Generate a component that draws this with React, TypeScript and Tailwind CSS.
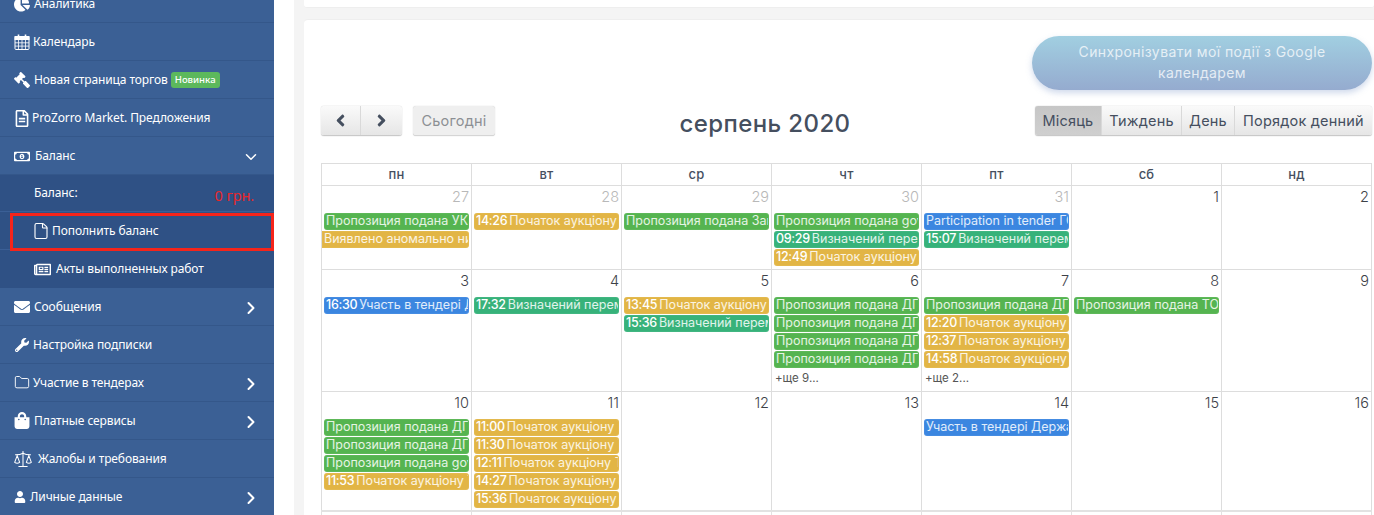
import React from "react";
import {
  FaChartPie, FaGavel, FaRegFileAlt, FaRegMoneyBillAlt, FaRegNewspaper,
  FaEnvelope, FaWrench, FaShoppingBag, FaUser, FaAngleRight, FaAngleLeft,
} from "react-icons/fa";
import { ChevronRight, ChevronDown, File, Folder, Scale } from "lucide-react";

type Ev = { t?: string; x: string; c: "g" | "y" | "b" | "t"; cont?: boolean };
type Day = { n: number; muted?: boolean; ev?: Ev[]; more?: string };

const colors: Record<Ev["c"], string> = {
  g: "bg-[#55b450]",
  y: "bg-[#e2b545]",
  b: "bg-[#3b86e0]",
  t: "bg-[#37b27a]",
};

const P = "Пропозиция подана ";
const A = "Початок аукціону ";
const V = "Визначений переможець";

const weeks: { h: string; days: Day[] }[] = [
  {
    h: "h-[84px]",
    days: [
      { n: 27, muted: true, ev: [{ x: P + "УКРАЇНА", c: "g" }, { x: "Виявлено аномально низьку ціну", c: "y", cont: true }] },
      { n: 28, muted: true, ev: [{ t: "14:26", x: A + "Т", c: "y" }] },
      { n: 29, muted: true, ev: [{ x: P + "Запоріжжя", c: "g" }] },
      { n: 30, muted: true, ev: [{ x: P + "gov.ua", c: "g" }, { t: "09:29", x: V, c: "t" }, { t: "12:49", x: A + "Т", c: "y" }] },
      { n: 31, muted: true, ev: [{ x: "Participation in tender ГО", c: "b" }, { t: "15:07", x: V, c: "t" }] },
      { n: 1 },
      { n: 2 },
    ],
  },
  {
    h: "h-[122px]",
    days: [
      { n: 3, ev: [{ t: "16:30", x: "Участь в тендері Державна", c: "b" }] },
      { n: 4, ev: [{ t: "17:32", x: V, c: "t" }] },
      { n: 5, ev: [{ t: "13:45", x: A + "Т", c: "y" }, { t: "15:36", x: V, c: "t" }] },
      { n: 6, ev: [{ x: P + "ДГ", c: "g" }, { x: P + "ДГ", c: "g" }, { x: P + "ДГ", c: "g" }, { x: P + "ДГ", c: "g" }], more: "+ще 9..." },
      { n: 7, ev: [{ x: P + "ДГ", c: "g" }, { t: "12:20", x: A + "Т", c: "y" }, { t: "12:37", x: A + "Т", c: "y" }, { t: "14:58", x: A + "Т", c: "y" }], more: "+ще 2..." },
      { n: 8, ev: [{ x: P + "ТОВ", c: "g" }] },
      { n: 9 },
    ],
  },
  {
    h: "h-[119px]",
    days: [
      { n: 10, ev: [{ x: P + "ДГ", c: "g" }, { x: P + "ДГ", c: "g" }, { x: P + "gov.ua", c: "g" }, { t: "11:53", x: A + "Т", c: "y" }] },
      { n: 11, ev: [{ t: "11:00", x: A + "Т", c: "y" }, { t: "11:30", x: A + "Т", c: "y" }, { t: "12:11", x: A + "Т", c: "y" }, { t: "14:27", x: A + "Т", c: "y" }, { t: "15:36", x: A + "Т", c: "y" }] },
      { n: 12 },
      { n: 13 },
      { n: 14, ev: [{ x: "Участь в тендері Державна", c: "b" }] },
      { n: 15 },
      { n: 16 },
    ],
  },
];

const headers = ["пн", "вт", "ср", "чт", "пт", "сб", "нд"];

function CalIcon() {
  return (
    <svg width="16" height="16" viewBox="0 0 16 16" fill="none" stroke="white" strokeWidth="1">
      <rect x="1" y="2.5" width="14" height="13" rx="1" />
      <rect x="1" y="2.5" width="14" height="3" fill="white" />
      <path d="M4.5 0.5v3M11.5 0.5v3" strokeWidth="1.6" />
      <path d="M4.5 5.5v10M8 5.5v10M11.5 5.5v10M1 8.8h14M1 12.1h14" strokeWidth="0.8" />
    </svg>
  );
}

function Item({ icon, label, gap, chevron, badge, top }: { icon: React.ReactNode; label: string; gap: string; chevron?: "r" | "d"; badge?: boolean; top?: boolean }) {
  return (
    <div className={`flex h-[38px] items-center border-b border-[#34578a] bg-[#3b6095] pl-[14px] pr-[13px] text-[12px] tracking-[-0.1px] text-white ${top ? "pt-[1px]" : ""}`}>
      <span className="flex w-[16px] shrink-0 justify-center text-[16px]">{icon}</span>
      <span className={gap}>{label}</span>
      {badge && <span className="ml-[3px] rounded-[3px] bg-[#5cb85c] px-[4px] text-[9.5px] font-medium leading-[16px] tracking-normal">Новинка</span>}
      {chevron === "r" && <ChevronRight size={20} strokeWidth={2.4} className="ml-auto mt-[3px]" />}
      {chevron === "d" && <ChevronDown size={18} strokeWidth={2} className="ml-auto mt-[2px] mr-[1px]" />}
    </div>
  );
}

function Sidebar() {
  return (
    <aside className="h-[515px] w-[274px] shrink-0 overflow-hidden bg-[#3b6095] font-['Noto_Sans',sans-serif]">
      <div className="-mt-[15px]">
        <Item top icon={<FaChartPie />} label="Аналитика" gap="ml-[4px]" />
        <Item top icon={<CalIcon />} label="Календарь" gap="ml-[3px]" />
        <Item top icon={<FaGavel className="-scale-x-100" />} label="Новая страница торгов" gap="ml-[4px]" badge />
        <Item top icon={<FaRegFileAlt className="text-[17px]" />} label="ProZorro Market. Предложения" gap="ml-[2px]" />
        <Item top icon={<FaRegMoneyBillAlt className="text-[17px]" />} label="Баланс" gap="ml-[5px]" chevron="d" />
        <div className="flex h-[37px] items-start justify-between border-b border-[#3b5f96] bg-[#2f5185] pl-[34px] pr-[20px] pt-[9px] text-[12px] tracking-[-0.1px] text-white">
          <span>Баланс:</span>
          <span className="mt-[1px] text-[14.5px] text-[#e8272b]">0 грн.</span>
        </div>
        <div className="relative flex h-[38px] items-center border-b border-[#3b5f96] bg-[#2f5185] pl-[32px] text-[12px] tracking-[-0.1px] text-white">
          <File size={18} strokeWidth={1.5} />
          <span className="ml-[2px]">Пополнить баланс</span>
          <div className="absolute bottom-[-2px] left-[10px] right-0 top-[1px] border-[3px] border-[#f5241a]" />
        </div>
        <div className="flex h-[38px] items-center bg-[#2f5185] pl-[34px] text-[12px] tracking-[-0.1px] text-white">
          <FaRegNewspaper className="text-[17px]" />
          <span className="ml-[5px]">Акты выполненных работ</span>
        </div>
        <Item icon={<FaEnvelope />} label="Сообщения" gap="ml-[4px]" chevron="r" />
        <Item icon={<FaWrench className="text-[14px]" />} label="Настройка подписки" gap="ml-[3px]" />
        <Item icon={<Folder size={17} strokeWidth={1.4} />} label="Участие в тендерах" gap="ml-[3px]" chevron="r" />
        <Item icon={<FaShoppingBag className="text-[17px]" />} label="Платные сервисы" gap="ml-[4px]" chevron="r" />
        <div className="flex h-[38px] items-center border-b border-[#34578a] pl-[13px] text-[12px] tracking-[-0.1px] text-white">
          <Scale size={20} strokeWidth={1.25} />
          <span className="ml-[5px]">Жалобы и требования</span>
        </div>
        <div className="flex h-[38px] items-center border-b border-[#34578a] pl-[14px] pr-[13px] text-[12px] tracking-[-0.1px] text-white">
          <FaUser className="text-[12px]" />
          <span className="ml-[4px]">Личные данные</span>
          <ChevronRight size={20} strokeWidth={2.4} className="ml-auto mt-[3px]" />
        </div>
      </div>
    </aside>
  );
}

function Btn({ children, className = "" }: { children: React.ReactNode; className?: string }) {
  return (
    <div className={`flex h-[29px] items-center justify-center border-r border-[#d9d9d9] bg-gradient-to-b from-[#fafafa] to-[#e6e6e6] text-[14.5px] tracking-[0.2px] text-[#454f5f] last:border-r-0 ${className}`}>
      {children}
    </div>
  );
}

function Event({ e }: { e: Ev }) {
  return (
    <div className={`mb-[1px] flex h-[17px] items-center overflow-hidden whitespace-nowrap border border-white/5 pl-[1px] text-[12.5px] text-white/85 ${colors[e.c]} ${e.cont ? "mr-[2px] rounded-r-[3px]" : "ml-[2px] mr-[2px] rounded-[3px]"}`}>
      {e.t && <span className="mr-[2px] font-medium tracking-[-0.3px] text-white">{e.t}</span>}
      <span>{e.x}</span>
    </div>
  );
}

function Cell({ d }: { d: Day }) {
  return (
    <div className="min-w-0 border-l border-t border-[#dddddd] last:border-r">
      <div className={`h-[27px] pr-[2px] pt-[1px] text-right text-[14.5px] font-light leading-[20px] ${d.muted ? "text-[#b8b8b8]" : "text-[#3d4148]"}`}>{d.n}</div>
      {d.ev?.map((e, i) => <Event key={i} e={e} />)}
      {d.more && <div className="ml-[3px] mt-[2px] text-[11.5px] leading-[16px] text-[#555]">{d.more}</div>}
    </div>
  );
}

export default function App() {
  return (
    <div className="flex h-[515px] w-[1374px] overflow-hidden bg-white font-['Inter',sans-serif]">
      <Sidebar />
      <main className="ml-[20px] flex h-[515px] min-w-0 flex-1 flex-col bg-[#f4f4f4] pl-[10px]">
        <div className="h-[8px] shrink-0 rounded-b-[3px] border-b border-[#eeeeee] bg-white" />
        <section className="mt-[11px] flex-1 rounded-tl-[4px] border-t border-[#eeeeee] bg-white pl-[17px] pr-[2px]">
          <div className="flex justify-end pt-[16px]">
            <div className="w-[340px] rounded-[28px] bg-gradient-to-b from-[#a1cfe1] to-[#95abcf] px-[30px] pb-[7px] pt-[5px] text-center text-[14px] leading-[21px] tracking-[0.4px] text-white/75 shadow-[0_3px_6px_rgba(120,150,200,0.35)]">
              Синхронізувати мої події з Google календарем
            </div>
          </div>
          <div className="mt-[16px] flex h-[30px] items-start justify-between">
            <div className="flex w-[174px] items-start">
              <div className="flex w-[81px] overflow-hidden rounded-[3px] border-b border-[#c9c9c9] shadow-[0_0_1px_rgba(0,0,0,0.35)]">
                <Btn className="w-[40px] text-[#222]"><FaAngleLeft className="text-[19px]" /></Btn>
                <Btn className="w-[41px] text-[#222]"><FaAngleRight className="text-[19px]" /></Btn>
              </div>
              <div className="ml-[11px] flex h-[30px] w-[82px] items-center justify-center rounded-[3px] border-b border-[#d5d5d5] bg-[#efefef] text-[14.5px] tracking-[0.2px] text-[#8c8f94] shadow-[0_0_1px_rgba(0,0,0,0.25)]">Сьогодні</div>
            </div>
            <h2 className="mt-[1px] text-[24px] font-medium leading-[34px] tracking-[0.4px] text-[#454f5f]">серпень 2020</h2>
            <div className="flex w-[337px] overflow-hidden rounded-[3px] border-b border-[#c9c9c9] shadow-[0_0_1px_rgba(0,0,0,0.35)]">
              <Btn className="w-[67px] !from-[#c6c6c6] !to-[#cfcfcf]">Місяць</Btn>
              <Btn className="w-[80px]">Тиждень</Btn>
              <Btn className="w-[53px]">День</Btn>
              <Btn className="flex-1">Порядок денний</Btn>
            </div>
          </div>
          <div className="mt-[27px] w-[1051px]">
            <div className="grid h-[22px] grid-cols-[repeat(6,150px)_151px]">
              {headers.map((h) => (
                <div key={h} className="flex items-center justify-center border-l border-t border-[#dddddd] text-[13px] font-medium tracking-[0.2px] text-[#454f5f] last:border-r">{h}</div>
              ))}
            </div>
            {weeks.map((w, i) => (
              <div key={i} className={`grid grid-cols-[repeat(6,150px)_151px] ${w.h}`}>
                {w.days.map((d) => <Cell key={d.n} d={d} />)}
              </div>
            ))}
            <div className="grid h-[6px] grid-cols-[repeat(6,150px)_151px]">
              {headers.map((h) => <div key={h} className="border-l border-t-2 border-[#e2e2e2] last:border-r" />)}
            </div>
          </div>
        </section>
      </main>
    </div>
  );
}
